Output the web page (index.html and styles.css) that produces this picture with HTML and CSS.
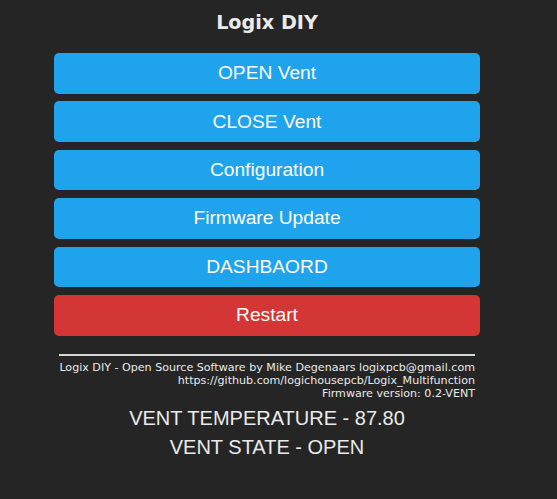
FILE: index.html
```html
<!DOCTYPE html>
<html>
<head>
<meta charset="utf-8">
<link rel="stylesheet" href="styles.css">
</head>
<body>
<div class="wrap">
  <h2 class="title">Logix DIY</h2>
  <div class="buttons">
    <button class="btn">OPEN Vent</button>
    <button class="btn">CLOSE Vent</button>
    <button class="btn">Configuration</button>
    <button class="btn">Firmware Update</button>
    <button class="btn">DASHBAORD</button>
    <button class="btn btn-red">Restart</button>
  </div>
  <div class="footer">
    <hr class="rule">
    <div class="credits">
      <div>Logix DIY - Open Source Software by Mike Degenaars logixpcb@gmail.com</div>
      <div>https://github.com/logichousepcb/Logix_Multifunction</div>
      <div>Firmware version: 0.2-VENT</div>
    </div>
  </div>
  <div class="status">
    <div class="stat">VENT TEMPERATURE - 87.80</div>
    <div class="stat">VENT STATE - OPEN</div>
  </div>
</div>
</body>
</html>
```
FILE: styles.css
```css
html, body {
  margin: 0;
  padding: 0;
  background: #252525;
  color: #eaeaea;
}
body {
  height: 499px;
}
.wrap {
  margin-left: 54px;
  width: 426px;
  padding-top: 12px;
}
.title {
  margin: 0;
  text-align: center;
  font-family: "DejaVu Sans", Verdana, sans-serif;
  font-weight: bold;
  font-size: 19.2px;
  line-height: 22px;
  color: #eaeaea;
}
.buttons {
  margin-top: 19px;
  display: flex;
  flex-direction: column;
  gap: 7.8px;
}
.btn {
  display: block;
  width: 100%;
  height: 40.6px;
  border: 0;
  border-radius: 5px;
  background: #1fa3ec;
  color: #fff;
  font-family: "Liberation Sans", Arial, sans-serif;
  font-size: 19.2px;
  padding: 0;
  margin: 0;
}
.btn-red {
  background: #d43535;
}
.footer {
  padding: 0 5px;
}
.rule {
  margin: 18px 0 0 0;
  border: 0;
  height: 2px;
  background: #d6d6d6;
}
.credits {
  margin-top: 6.5px;
  text-align: right;
  font-family: "DejaVu Sans", Verdana, sans-serif;
  font-size: 11.1px;
  line-height: 12.9px;
  color: #eaeaea;
}
.status {
  margin-top: 3px;
  text-align: center;
  font-family: "Liberation Sans", Arial, sans-serif;
  font-size: 20px;
  line-height: 29px;
  color: #eaeaea;
}
.stat {
  display: block;
}
```
